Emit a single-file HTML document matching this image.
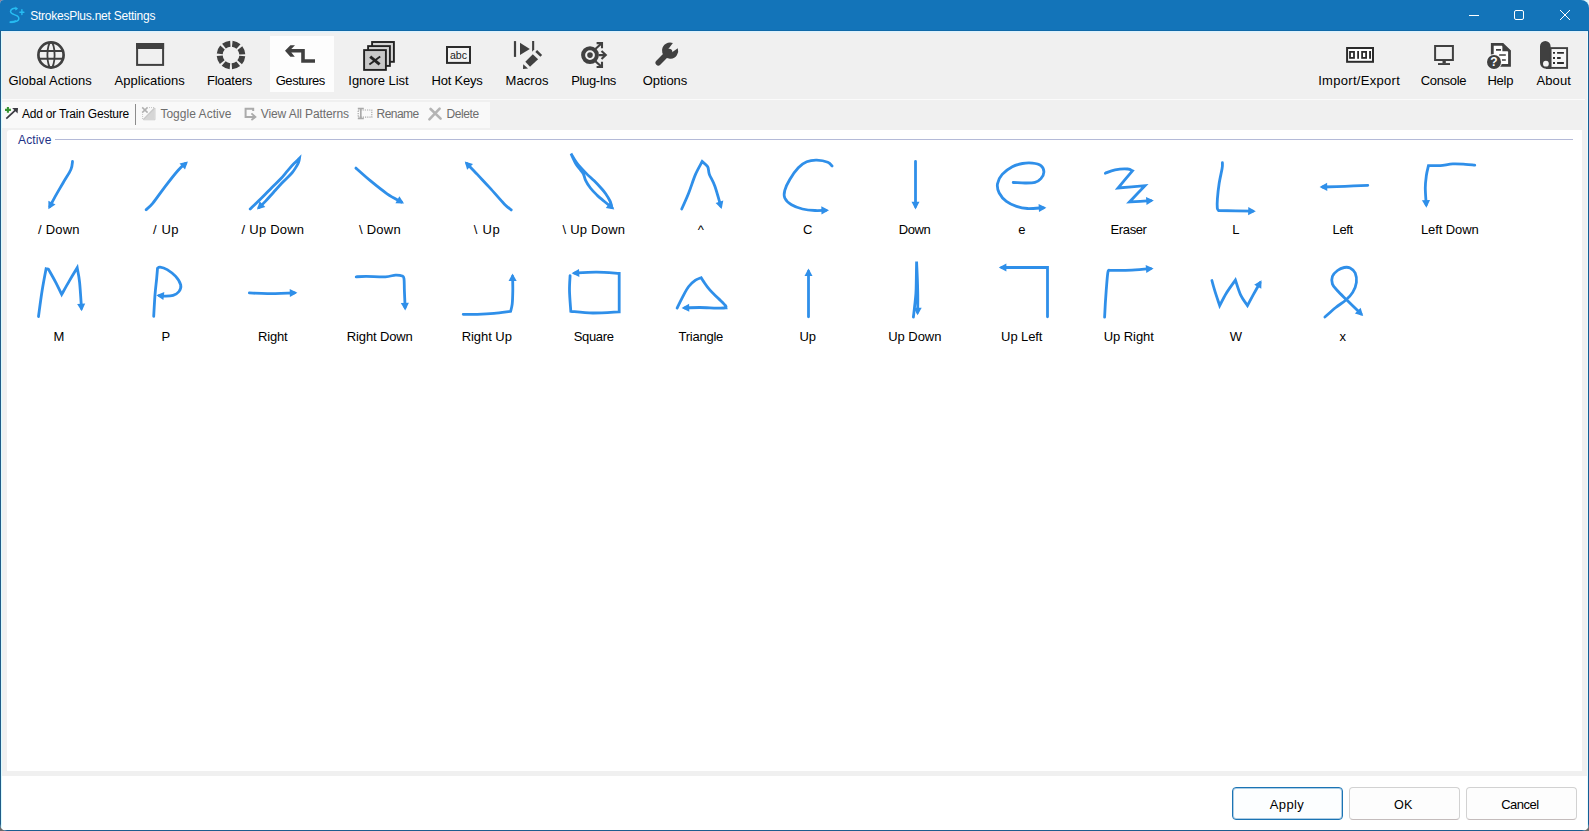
<!DOCTYPE html>
<html>
<head>
<meta charset="utf-8">
<title>StrokesPlus.net Settings</title>
<style>
html,body{margin:0;padding:0;}
body{width:1589px;height:831px;overflow:hidden;position:relative;background:#6a6a6a;font-family:"Liberation Sans",sans-serif;}
#win{position:absolute;left:0;top:0;width:1589px;height:831px;background:#f0f0f0;border-radius:4px 8px 7px 7px;overflow:hidden;}
.cn{position:absolute;width:10px;height:10px;}
#win div{position:absolute;}
#title{left:0;top:0;width:1589px;height:31px;background:#1374b9;}
#tdark{left:0;top:30px;width:1589px;height:1px;background:#0f69a8;}
#tline{left:1px;top:31px;width:1587px;height:1px;background:#dff1fb;}
#tline2{left:2px;top:32px;width:1585px;height:1px;background:#e6f1f8;}
#bl{left:0;top:31px;width:1px;height:800px;background:#205c88;}
#bl2{left:1px;top:32px;width:1px;height:798px;background:#d9fbff;}
#br{left:1588px;top:31px;width:1px;height:800px;background:#165d95;}
#br2{left:1587px;top:32px;width:1px;height:798px;background:#e6fdff;}
#bb{left:0;top:830px;width:1589px;height:1px;background:#1b5d8f;}
#sel{left:270px;top:36px;width:64px;height:56px;background:#fdfdfd;}
#hl{left:2px;top:99px;width:1583px;height:1px;background:#fbfbfb;}
#tb2{left:2px;top:102px;width:488px;height:26px;background:#f9f9f9;}
#sep{left:135px;top:104px;width:1px;height:21px;background:#8c8c8c;}
#content{left:7px;top:130px;width:1575px;height:641px;background:#fff;border-top-left-radius:3px;}
#gline{left:55px;top:139px;width:1518px;height:1px;background:#b4bad8;}
#bottom{left:2px;top:776px;width:1585px;height:54px;background:#fff;}
.btn{top:787px;width:109px;height:31px;border:1px solid #d2d2d2;border-bottom-color:#c4bcbc;border-radius:4px;background:#fdfdfd;}
#b1{left:1232px;border:1px solid #1b74b4;box-shadow:inset 0 0 0 1px rgba(27,116,180,.35);background:#fcfeff;}
#b2{left:1349px;}
#b3{left:1466px;}
svg{position:absolute;left:0;top:0;}
text{font-family:"Liberation Sans",sans-serif;}
</style>
</head>
<body>
<div class="cn" style="left:0;top:0;background:#8d7d98"></div><div class="cn" style="left:1579px;top:0;background:#dff6fb"></div>
<div id="win">
<div id="title"></div>
<div id="tdark"></div><div id="tline"></div><div id="tline2"></div>
<div id="sel"></div>
<div id="hl"></div>
<div id="tb2"></div>
<div id="sep"></div>
<div id="content"></div>
<div id="gline"></div>
<div id="bottom"></div>
<div class="btn" id="b1"></div>
<div class="btn" id="b2"></div>
<div class="btn" id="b3"></div>
<div id="bl"></div><div id="bl2"></div><div id="br"></div><div id="br2"></div><div id="bb"></div>

<svg width="1589" height="831" viewBox="0 0 1589 831">
<!-- title bar: logo + window controls -->
<g fill="none" stroke="#27bdf2" stroke-width="1.5" stroke-linecap="round" stroke-linejoin="round">
<path d="M16.6,8.7 C13.8,7.6 10.5,8.9 10.5,11.6 C10.5,14.3 14.6,14.3 17.2,15.9 C19.8,17.7 19.2,20.4 16.6,21.3 C14.6,21.9 12.2,21.9 10.4,22.2"/>
<path d="M21.9,9.8 V14.5 M19.9,12.2 H23.9" stroke-width="1.4"/>
<path d="M15.6,7.2 L17.7,8.5 L15.8,9.9 Z" fill="#27bdf2" stroke-width="0.5"/>
<path d="M10.2,22.7 C12.4,22.9 14.8,22.4 16.6,21.4 L15.9,20.4 C14.2,21 12.2,21.4 10.2,21.6 Z" fill="#27bdf2" stroke-width="0.5"/>
</g>
<g fill="none" stroke="#fff" stroke-width="1">
<path d="M1469,15.5 H1479"/>
<rect x="1514.5" y="10.5" width="9" height="9" rx="1.5"/>
<path d="M1560,10 L1570,20 M1570,10 L1560,20"/>
</g>

<!-- ===== main toolbar icons ===== -->
<!-- Global Actions: globe -->
<g fill="none" stroke="#404040">
<circle cx="51" cy="55" r="12.6" stroke-width="2.7"/>
<ellipse cx="51" cy="55" rx="3.6" ry="12.6" stroke-width="1.8"/>
<path d="M39,51 H63 M39,58.8 H63" stroke-width="1.9"/>
</g>
<!-- Applications: window -->
<g>
<rect x="137.1" y="44" width="26" height="20.9" fill="none" stroke="#404040" stroke-width="2"/>
<rect x="136.1" y="43" width="28" height="6" fill="#404040"/>
</g>
<!-- Floaters: segmented ring -->
<circle cx="231" cy="55" r="11.3" fill="none" stroke="#404040" stroke-width="6" stroke-dasharray="6.87 2" stroke-dashoffset="-1"/>
<!-- Gestures: stepped arrow -->
<g fill="#404040">
<path d="M285,50.8 L290.4,45.2 L295,45.2 L291.3,49.1 L304.8,49.1 L304.8,59.3 L315,59.3 L315,62.8 L301.2,62.8 L301.2,52.6 L291.3,52.6 L294.8,56.8 L290.4,56.8 Z"/>
</g>
<!-- Ignore List: stacked windows -->
<g stroke="#222" stroke-width="1.9">
<rect x="372.1" y="42" width="21.8" height="19.8" fill="#d4d4d4"/>
<rect x="368.1" y="46.1" width="21.8" height="19.8" fill="#d4d4d4"/>
<rect x="364.1" y="50.1" width="21.8" height="19.8" fill="#c8c8c8"/>
<path d="M370.2,56.7 L379.6,64.3" stroke-width="3" fill="none"/><path d="M380.2,56.6 L369.4,64.4" stroke-width="1.9" fill="none"/>
</g>
<!-- Hot Keys: abc box -->
<rect x="447" y="47" width="23" height="15.9" fill="#f4f4f4" stroke="#2c2c2c" stroke-width="2"/>
<text x="458.5" y="58.8" font-size="10.6" text-anchor="middle" fill="#222">abc</text>
<!-- Macros: play + pencil -->
<g fill="#404040">
<rect x="513.9" y="41.1" width="2.2" height="15.8"/>
<path d="M520,42.8 L529.8,48.9 L520,54.9 Z"/>
<path d="M532.1,41.1 H534.2 V49.6 L532.1,51.7 Z"/>
<path d="M532.8,54.2 L538.1,59.2 L530,66.7 L525.3,61.7 Z"/>
<path d="M537.1,50.1 L542.1,54.9 L540.4,56.7 L535.3,51.9 Z"/>
<path d="M523.2,64.2 L528,68.4 L523,69 Z"/>
</g>
<!-- Plug-Ins: target with arrows -->
<g fill="none" stroke="#404040">
<circle cx="590" cy="55.1" r="6.9" stroke-width="4"/>
<path d="M595.4,49 L601.4,43.5 M596.6,43.1 H602 V48.3 M598.8,55.1 H605 M601.5,50.9 L605.8,55.1 L601.5,59.1 M595.4,61.2 L601.4,66.6 M596.6,67 H602 V61.8" stroke-width="2.1"/>
</g>
<circle cx="590" cy="55.1" r="2.8" fill="#404040"/>
<!-- Options: wrench -->
<g>
<path d="M669.4,51.6 L658.3,62.7" stroke="#404040" stroke-width="5.6" stroke-linecap="round" fill="none"/>
<path d="M672.9,43.1 A8.1,8.1 0 1 0 677.8,48.2 L671.7,52.5 L668.4,48.9 Z" fill="#404040"/>
</g>
<!-- Import/Export: 0101 -->
<g>
<rect x="1347.1" y="48" width="25.9" height="13.8" fill="#fff" stroke="#2c2c2c" stroke-width="2"/>
<rect x="1350" y="51.9" width="4" height="6" fill="none" stroke="#2c2c2c" stroke-width="1.8"/>
<rect x="1357.2" y="51" width="1.8" height="7.8" fill="#2c2c2c"/>
<rect x="1362.1" y="51.9" width="4" height="6" fill="none" stroke="#2c2c2c" stroke-width="1.8"/>
<rect x="1369.1" y="51" width="1.9" height="7.8" fill="#2c2c2c"/>
</g>
<!-- Console: monitor -->
<g>
<rect x="1435.1" y="46" width="17.8" height="14" fill="none" stroke="#404040" stroke-width="2"/>
<rect x="1442.5" y="60.9" width="3.3" height="2.4" fill="#404040"/>
<rect x="1438" y="63.1" width="12" height="1.9" fill="#404040"/>
</g>
<!-- Help: document + ? -->
<g>
<path d="M1492.3,55 V44.4 H1502.6 L1509.5,51 V65.4 H1500" fill="#fff" stroke="#404040" stroke-width="2.8"/>
<path d="M1502.4,43 L1510.9,51.2 L1502.4,51.2 Z" fill="#404040"/>
<path d="M1496,49.9 H1501 M1499.2,55 H1505.8 M1502,60 H1505.8" stroke="#404040" stroke-width="1.7" fill="none"/>
<circle cx="1494" cy="62" r="8" fill="#f6f6f6"/>
<circle cx="1494" cy="62" r="7" fill="#404040"/>
<text x="1494" y="66.3" font-size="12" font-weight="bold" text-anchor="middle" fill="#fff">?</text>
</g>
<!-- About: scroll -->
<g>
<path d="M1540,46.2 A5.3,5.3 0 0 1 1550.6,46.2 V68.8 H1546 A6,6 0 0 1 1540,62.8 Z" fill="#404040"/>
<rect x="1550.6" y="48.1" width="16.5" height="19.8" fill="#f6f6f6" stroke="#404040" stroke-width="1.9"/>
<path d="M1546,68 H1551" stroke="#404040" stroke-width="1.9"/>
<circle cx="1545.9" cy="63.7" r="2.9" fill="#f4f4f4"/>
<path d="M1553,52.9 H1555 M1557.1,52.9 H1563.9 M1553,58 H1555 M1557.1,58 H1560.7 M1553,63 H1555 M1557.1,63 H1563.9" stroke="#2c2c2c" stroke-width="1.9" fill="none"/>
</g>

<!-- ===== secondary toolbar icons ===== -->
<path d="M7.9,107 V112.7 M5,109.9 H10.9" stroke="#35932f" stroke-width="2.1" fill="none"/>
<path d="M6.3,118.6 L16,109.6" stroke="#3a3a42" stroke-width="1.7" fill="none"/>
<path d="M12.2,108.1 L18,107.9 L17.6,113.6 Z" fill="#3a3a42"/>
<!-- toggle active (disabled) -->
<g>
<path d="M154.6,108.2 V119.6 H143.4 Z" fill="#d6d6d6"/>
<path d="M154.6,108 L143.2,119.6" stroke="#c6c6c6" stroke-width="1.2" fill="none"/>
<path d="M142.2,107.4 L147.6,112.6 M147.6,107.4 L142.2,112.6" stroke="#b0b0b0" stroke-width="1.5" fill="none"/>
<path d="M149,107.6 H154.8 M142.6,114 V119.6" stroke="#c4c4c4" stroke-width="1" stroke-dasharray="1 1" fill="none"/>
<path d="M143.4,119.8 H155 V108" stroke="#cfcfcf" stroke-width="1" fill="none"/>
</g>
<!-- view all patterns (disabled) -->
<g fill="none" stroke="#ababab" stroke-width="2">
<path d="M253.2,111 V108.8 H245.6 V117 H254"/>
<path d="M251.4,113.4 L255.4,117 L251.4,120" stroke-width="1.8"/>
</g>
<!-- rename (disabled) -->
<g fill="none" stroke="#a9a9a9">
<path d="M357.8,108.5 H363.8 M357.8,118.5 H363.8 M360.8,108.5 V118.5" stroke-width="1.7"/>
<rect x="358.2" y="110" width="13.6" height="7.2" stroke-width="1.2" stroke-dasharray="1.2 1"/>
</g>
<!-- delete (disabled) -->
<g fill="none" stroke="#b4b4b4" stroke-width="2.6" stroke-linecap="round">
<path d="M430.6,109 L440.6,118.6 M439.6,108.6 L429.4,119.4"/>
</g>

<!-- ===== gestures ===== -->
<path d="M72.5,161.5 C72.3,162.9 72.4,166 70.9,169.5 C69.4,173 66,177.8 63.3,182.5 C60.6,187.2 56.8,193.6 54.6,197.6 C52.4,201.6 50.6,205.1 49.8,206.6" fill="none" stroke="#2f8fe9" stroke-width="2.8" stroke-linecap="round" stroke-linejoin="miter" stroke-miterlimit="5"/><path d="M48.4,209.3 L48.4,200.7 L55.5,204.5Z" fill="#2f8fe9"/>
<path d="M146.1,209.7 C147.2,208.6 149.8,206.9 152.9,203.1 C156,199.3 160.5,192.6 164.7,187.1 C168.9,181.6 174.7,174.1 178.2,170.2 C181.7,166.3 184.4,164.5 185.7,163.4" fill="none" stroke="#2f8fe9" stroke-width="2.8" stroke-linecap="round" stroke-linejoin="miter" stroke-miterlimit="5"/><path d="M187.9,161.4 L185,169.5 L179.5,163.5Z" fill="#2f8fe9"/>
<path d="M250.2,209.1 C252.2,207.1 258.7,200.9 262.3,197.3 C265.9,193.7 268.8,190.5 271.9,187.4 C275,184.3 278.4,181.3 281,178.5 C283.6,175.7 285.5,173.1 287.7,170.6 C289.9,168.1 292,165.6 294,163.6 C296,161.6 298.6,159.2 299.5,158.3 C299.4,159 299.1,161 298.6,162.3 C298.1,163.6 297.8,164.3 296.7,166 C295.6,167.7 294.4,170.1 292.1,172.7 C289.9,175.3 286.2,178.6 283.2,181.8 C280.1,185 276.7,188.8 273.8,192 C270.9,195.2 268,198.5 265.6,201.1 C263.2,203.7 260.2,206.4 259.1,207.4" fill="none" stroke="#2f8fe9" stroke-width="2.8" stroke-linecap="round" stroke-linejoin="miter" stroke-miterlimit="5"/><path d="M257,209.5 L259.6,201.3 L265.3,207.1Z" fill="#2f8fe9"/>
<path d="M355.9,168.1 C358.3,170.2 365.1,176.4 370.3,180.7 C375.5,185 381.9,190.2 387.1,193.8 C392.3,197.4 399,200.6 401.4,202" fill="none" stroke="#2f8fe9" stroke-width="2.8" stroke-linecap="round" stroke-linejoin="miter" stroke-miterlimit="5"/><path d="M404,203.5 L395.4,203.2 L399.4,196.2Z" fill="#2f8fe9"/>
<path d="M511.2,209.9 C510.1,208.9 507.8,207.6 504.2,203.9 C500.6,200.2 494.4,192.8 489.9,187.9 C485.4,183 481.1,178.5 477.3,174.4 C473.5,170.3 468.6,165.4 466.9,163.6" fill="none" stroke="#2f8fe9" stroke-width="2.8" stroke-linecap="round" stroke-linejoin="miter" stroke-miterlimit="5"/><path d="M464.8,161.4 L473,164.1 L467.1,169.7Z" fill="#2f8fe9"/>
<path d="M611.5,205.6 C611.3,204.8 611,203 610,201 C609,199 606.9,195.5 605.5,193.5 C604.1,191.5 603.8,191.1 601.9,189 C600,186.9 596.9,183.5 594.2,180.8 C591.6,178.2 588.9,176.1 586,173.1 C583.1,170.1 579.4,166.2 576.9,163 C574.4,159.8 572,155.2 571,153.6 C571.8,155.3 574.4,161.3 576,164 C577.6,166.7 579.2,168.2 580.5,170 C581.8,171.8 582.8,172.8 583.6,174.5 C584.5,176.2 584.5,178.1 585.6,180.3 C586.7,182.6 588.5,185.5 590.4,188 C592.3,190.5 594.9,193 597.1,195.2 C599.3,197.4 601.3,198.9 603.8,201 C606.3,203.1 610.6,206.5 612,207.6" fill="none" stroke="#2f8fe9" stroke-width="2.8" stroke-linecap="round" stroke-linejoin="miter" stroke-miterlimit="5"/><path d="M614.3,209.5 L605.8,207.9 L610.9,201.6Z" fill="#2f8fe9"/>
<path d="M681.7,209 C682.9,206.4 686.4,198.8 688.7,193 C691,187.2 693.2,179.7 695.5,174.4 C697.8,169.2 701.1,163.7 702.2,161.5 C703.1,162.4 706.5,164.7 707.7,166.8 C708.9,169 708.2,171.2 709.4,174.4 C710.6,177.6 713,180.9 714.9,186.2 C716.8,191.5 719.8,202.8 720.8,206.1" fill="none" stroke="#2f8fe9" stroke-width="2.8" stroke-linecap="round" stroke-linejoin="miter" stroke-miterlimit="5"/><path d="M721.6,209 L715.6,202.9 L723.3,200.6Z" fill="#2f8fe9"/>
<path d="M832.1,166.1 C831.4,165.4 830.3,163.2 827.8,162.2 C825.3,161.2 820.3,160.2 816.8,160.1 C813.3,160 809.8,160.5 806.7,161.8 C803.6,163.1 801.1,164.8 798.3,167.7 C795.5,170.6 792,175.7 789.8,179.5 C787.5,183.3 785.6,187.3 784.8,190.4 C784,193.5 783.7,195.6 784.8,198 C785.9,200.4 788.5,203 791.5,204.8 C794.5,206.6 798.6,208.1 802.5,209 C806.4,209.9 811.2,210.3 815.1,210.5 C819,210.7 824.2,210.3 826,210.3" fill="none" stroke="#2f8fe9" stroke-width="2.8" stroke-linecap="round" stroke-linejoin="miter" stroke-miterlimit="5"/><path d="M829,210.2 L821.5,214.4 L821.3,206.3Z" fill="#2f8fe9"/>
<path d="M915.5,161.4 C915.5,165.3 915.5,177.5 915.5,185 C915.5,192.5 915.5,202.8 915.5,206.4" fill="none" stroke="#2f8fe9" stroke-width="2.8" stroke-linecap="round" stroke-linejoin="miter" stroke-miterlimit="5"/><path d="M915.5,209.4 L911.5,201.8 L919.5,201.8Z" fill="#2f8fe9"/>
<path d="M1013.2,182.5 C1015.1,182.5 1021.3,183 1024.9,183 C1028.5,183 1032.3,183.1 1035,182.4 C1037.7,181.7 1039.4,180.3 1040.9,178.6 C1042.4,176.8 1043.9,174.1 1043.9,171.9 C1043.9,169.7 1042.8,167.1 1040.9,165.6 C1039,164.1 1035.6,163.4 1032.5,163.1 C1029.4,162.8 1025.8,162.9 1022.4,163.5 C1019,164.1 1015.7,165 1012.3,166.8 C1008.9,168.6 1004.7,171.6 1002.2,174.4 C999.7,177.2 998,180.6 997.5,183.7 C997,186.8 997.7,190.1 999.2,193 C1000.7,195.9 1003.5,199.2 1006.4,201.4 C1009.3,203.6 1013,205.2 1016.5,206.4 C1020,207.6 1022.9,208.3 1027.4,208.5 C1031.9,208.7 1040.7,207.9 1043.4,207.8" fill="none" stroke="#2f8fe9" stroke-width="2.8" stroke-linecap="round" stroke-linejoin="miter" stroke-miterlimit="5"/><path d="M1046.4,207.7 L1039,212.1 L1038.6,204Z" fill="#2f8fe9"/>
<path d="M1105.3,173.2 C1106.9,172.6 1111.4,170.5 1115.1,169.8 C1118.8,169.1 1124.8,168.8 1127.7,169 C1130.6,169.2 1131.6,170.5 1132.4,170.8 C1130,173.7 1120.4,185.1 1118,188 C1122.5,187.6 1140.5,186 1145,185.6 C1142.4,188.3 1132.1,199.3 1129.5,202 C1133.1,201.8 1147.3,200.9 1150.8,200.7" fill="none" stroke="#2f8fe9" stroke-width="2.8" stroke-linecap="round" stroke-linejoin="miter" stroke-miterlimit="5"/><path d="M1153.8,200.5 L1146.5,205 L1146,196.9Z" fill="#2f8fe9"/>
<path d="M1222.4,162.7 C1222.4,163.6 1222.7,165 1222.1,168.5 C1221.5,172 1219.9,178.6 1219.1,183.7 C1218.3,188.8 1217.7,194.8 1217.4,198.9 C1217.1,203 1217.1,206.2 1217.3,208.1 C1217.5,210 1218.5,210.1 1218.7,210.5 C1224.4,210.6 1247.1,211.1 1252.8,211.2" fill="none" stroke="#2f8fe9" stroke-width="2.8" stroke-linecap="round" stroke-linejoin="miter" stroke-miterlimit="5"/><path d="M1255.8,211.3 L1248.1,215.2 L1248.3,207.1Z" fill="#2f8fe9"/>
<path d="M1367.8,185.4 C1364,185.6 1352.5,186 1345,186.3 C1337.5,186.6 1326.3,186.9 1322.6,187" fill="none" stroke="#2f8fe9" stroke-width="2.8" stroke-linecap="round" stroke-linejoin="miter" stroke-miterlimit="5"/><path d="M1319.6,187.1 L1327.1,182.8 L1327.3,190.9Z" fill="#2f8fe9"/>
<path d="M1474.8,165.1 C1473.3,165 1469.2,164.5 1465.5,164.3 C1461.8,164.1 1457.1,163.7 1452.9,163.9 C1448.7,164.1 1444.4,165.3 1440.3,165.6 C1436.2,165.9 1430.5,165.6 1428.5,165.6 C1428.2,167.2 1426.9,171.6 1426.4,175.3 C1425.9,179 1425.3,183 1425.3,187.9 C1425.3,192.8 1426.1,201.9 1426.2,204.7" fill="none" stroke="#2f8fe9" stroke-width="2.8" stroke-linecap="round" stroke-linejoin="miter" stroke-miterlimit="5"/><path d="M1426.4,207.7 L1421.9,200.3 L1430,199.9Z" fill="#2f8fe9"/>
<path d="M38.5,316.5 C39.1,312.2 40.8,298.6 42.1,290.7 C43.4,282.8 45.4,272.4 46.1,268.8 C46.5,268.9 48,269.1 48.4,269.2 C49.5,271.2 53,277.2 55.2,281.4 C57.4,285.6 60.6,292.2 61.7,294.4 C63,292.1 66.9,285 69.5,280.6 C72.1,276.2 75.9,269.9 77.2,267.8 C77.6,270.2 78.9,275.5 79.6,282.3 C80.3,289.1 81.2,304 81.5,308.3" fill="none" stroke="#2f8fe9" stroke-width="2.8" stroke-linecap="round" stroke-linejoin="miter" stroke-miterlimit="5"/><path d="M81.7,311.3 L77.1,304 L85.2,303.4Z" fill="#2f8fe9"/>
<path d="M153.7,316.4 C153.9,312.9 154.5,301.3 155,294.9 C155.5,288.5 156.3,282.5 156.7,278.1 C157.1,273.7 157.4,270 157.5,268.4 C157.9,268.2 158.5,266.9 160.1,267.1 C161.7,267.3 164.6,268.1 167.2,269.6 C169.8,271.2 173.4,273.9 175.7,276.4 C177.9,278.9 180.1,282.3 180.7,284.8 C181.2,287.3 180.3,289.8 179,291.5 C177.7,293.2 175.5,294.5 173.1,295.3 C170.7,296.1 167,296.1 164.7,296.2 C162.4,296.3 160.2,295.7 159.3,295.6" fill="none" stroke="#2f8fe9" stroke-width="2.8" stroke-linecap="round" stroke-linejoin="miter" stroke-miterlimit="5"/><path d="M156.3,295.3 L164.3,292.1 L163.4,300.1Z" fill="#2f8fe9"/>
<path d="M249.4,292.9 C252.4,293 260,293.6 267.5,293.6 C275,293.6 289.9,293 294.4,292.9" fill="none" stroke="#2f8fe9" stroke-width="2.8" stroke-linecap="round" stroke-linejoin="miter" stroke-miterlimit="5"/><path d="M297.4,292.8 L289.9,297.1 L289.7,289Z" fill="#2f8fe9"/>
<path d="M356.2,276.8 C357.8,276.7 361.2,276.4 366.1,276.4 C371,276.4 380.5,277 385.4,276.8 C390.3,276.6 392.7,275.2 395.5,275.1 C398.3,275 400.9,275.4 402.3,276 C403.7,276.6 403.6,276.4 404,278.9 C404.4,281.3 404.2,285.9 404.4,290.7 C404.6,295.5 405,304.7 405.1,307.5" fill="none" stroke="#2f8fe9" stroke-width="2.8" stroke-linecap="round" stroke-linejoin="miter" stroke-miterlimit="5"/><path d="M405.2,310.5 L400.8,303.1 L408.9,302.7Z" fill="#2f8fe9"/>
<path d="M463.2,314.3 C465.5,314.3 472.1,314.5 477.3,314.3 C482.5,314.1 488.6,313.8 494.1,313.3 C499.7,312.8 507.9,311.6 510.6,311.3 C510.9,310.1 511.8,307.6 512.2,304.2 C512.6,300.8 512.7,295.3 512.8,290.7 C512.9,286.1 512.6,278.8 512.6,276.4" fill="none" stroke="#2f8fe9" stroke-width="2.8" stroke-linecap="round" stroke-linejoin="miter" stroke-miterlimit="5"/><path d="M512.5,273.4 L516.7,280.9 L508.6,281.1Z" fill="#2f8fe9"/>
<path d="M570.1,275.6 C570,278.1 569.4,284.7 569.5,290.7 C569.6,296.7 570.6,307.9 570.8,311.3 C574.4,311.6 584.6,312.9 592.7,313 C600.8,313.1 614.8,312 619.2,311.8 C619.2,308.3 619.2,297.1 619.2,290.7 C619.2,284.3 619.2,276.3 619.2,273.4 C615.5,273.2 604.3,272.3 596.9,272.2 C589.5,272.1 578.3,272.9 574.6,273.1" fill="none" stroke="#2f8fe9" stroke-width="2.8" stroke-linecap="round" stroke-linejoin="miter" stroke-miterlimit="5"/><path d="M571.6,273.2 L579,268.9 L579.4,276.9Z" fill="#2f8fe9"/>
<path d="M677.1,308.1 C678,306.2 680.9,300.2 682.8,296.6 C684.7,293 686.6,289.2 688.7,286.5 C690.8,283.8 693.4,281.7 695.5,280.2 C697.6,278.7 700.2,278.1 701.2,277.7 C701.6,278.3 702.1,279.4 703.5,281.4 C704.9,283.4 707.3,287.1 709.8,289.9 C712.2,292.7 715.6,295.7 718.2,298.3 C720.8,300.9 724.1,303.9 725.4,305.5 C726.7,307.1 725.8,307.5 725.9,307.9 C724.3,307.9 720.9,308.3 716.5,308.2 C712.1,308.1 705,307.5 699.7,307.5 C694.4,307.5 687.1,307.8 684.6,307.9" fill="none" stroke="#2f8fe9" stroke-width="2.8" stroke-linecap="round" stroke-linejoin="miter" stroke-miterlimit="5"/><path d="M681.6,308 L689.1,303.7 L689.3,311.8Z" fill="#2f8fe9"/>
<path d="M808.5,316.8 C808.5,312.4 808.5,297.6 808.5,290 C808.5,282.4 808.5,274.5 808.5,271.4" fill="none" stroke="#2f8fe9" stroke-width="2.8" stroke-linecap="round" stroke-linejoin="miter" stroke-miterlimit="5"/><path d="M808.5,268.4 L812.5,276 L804.5,276Z" fill="#2f8fe9"/>
<path d="M913.4,317.1 C913.6,315.2 914.3,309.6 914.7,305.7 C915.1,301.8 915.6,297.9 915.9,293.6 C916.2,289.3 916.2,285.4 916.3,280 C916.4,274.6 916.5,264.6 916.6,261.5 C916.7,264.6 917.2,273.9 917.4,280 C917.6,286.1 917.8,293 917.8,298.4 C917.8,303.8 917.7,310 917.6,312.3" fill="none" stroke="#2f8fe9" stroke-width="2.8" stroke-linecap="round" stroke-linejoin="miter" stroke-miterlimit="5"/><path d="M917.6,315.3 L913.6,307.7 L921.7,307.7Z" fill="#2f8fe9"/>
<path d="M1047.5,316.8 C1047.5,308.6 1047.5,275.7 1047.5,267.5 C1039.9,267.5 1009.4,267.5 1001.8,267.5" fill="none" stroke="#2f8fe9" stroke-width="2.8" stroke-linecap="round" stroke-linejoin="miter" stroke-miterlimit="5"/><path d="M998.8,267.5 L1006.4,263.4 L1006.4,271.6Z" fill="#2f8fe9"/>
<path d="M1104.6,317.2 C1104.8,312.8 1105.6,298.2 1106.2,290.7 C1106.8,283.2 1107.3,275.6 1107.9,272.2 C1108.5,268.8 1109.3,270.6 1109.6,270.3 C1113.3,270.3 1125.1,270.4 1131.9,270.1 C1138.7,269.8 1147.5,268.9 1150.6,268.6" fill="none" stroke="#2f8fe9" stroke-width="2.8" stroke-linecap="round" stroke-linejoin="miter" stroke-miterlimit="5"/><path d="M1153.6,268.4 L1146.3,273 L1145.7,265Z" fill="#2f8fe9"/>
<path d="M1211.9,280.5 C1212.4,282.5 1214,288.2 1215.3,292.4 C1216.6,296.6 1219,303.4 1219.7,305.6 C1220.8,303.5 1223.7,297.5 1226.3,293.2 C1228.9,288.9 1233.9,282.2 1235.4,280 C1236.3,282.5 1238.6,290.6 1240.6,294.9 C1242.6,299.2 1246.3,303.8 1247.5,305.6 C1248.5,303.8 1251.1,298.7 1253.2,294.9 C1255.3,291.1 1258.9,284.8 1260,282.8" fill="none" stroke="#2f8fe9" stroke-width="2.8" stroke-linecap="round" stroke-linejoin="miter" stroke-miterlimit="5"/><path d="M1261.5,280.2 L1261.3,288.8 L1254.2,284.8Z" fill="#2f8fe9"/>
<path d="M1324.9,317 C1326.8,315.4 1332.3,310.3 1335.8,307.5 C1339.3,304.7 1343.1,302.5 1345.9,300 C1348.7,297.5 1351,295.3 1352.7,292.4 C1354.5,289.4 1356,285.5 1356.4,282.3 C1356.8,279.1 1356.2,275.4 1355.2,273 C1354.2,270.6 1351.9,268.9 1350.1,268 C1348.3,267.1 1346.3,267.1 1344.2,267.5 C1342.1,267.9 1339.5,269 1337.5,270.5 C1335.5,272 1333.2,274.1 1332.4,276.4 C1331.6,278.6 1331.6,281.6 1332.4,284 C1333.2,286.4 1335,287.9 1337.5,290.7 C1340,293.5 1343.7,296.9 1347.6,300.8 C1351.5,304.7 1358.8,311.7 1361.1,313.9" fill="none" stroke="#2f8fe9" stroke-width="2.8" stroke-linecap="round" stroke-linejoin="miter" stroke-miterlimit="5"/><path d="M1363.2,316 L1354.9,313.6 L1360.6,307.8Z" fill="#2f8fe9"/>

<!-- ===== text ===== -->
<text x="38.1" y="234" font-size="13" fill="#000" text-anchor="start" textLength="41.4" lengthAdjust="spacing">/ Down</text>
<text x="153.1" y="234" font-size="13" fill="#000" text-anchor="start" textLength="25.5" lengthAdjust="spacing">/ Up</text>
<text x="241.6" y="234" font-size="13" fill="#000" text-anchor="start" textLength="62.5" lengthAdjust="spacing">/ Up Down</text>
<text x="358.9" y="234" font-size="13" fill="#000" text-anchor="start" textLength="41.8" lengthAdjust="spacing">\ Down</text>
<text x="473.8" y="234" font-size="13" fill="#000" text-anchor="start" textLength="26" lengthAdjust="spacing">\ Up</text>
<text x="562.4" y="234" font-size="13" fill="#000" text-anchor="start" textLength="62.7" lengthAdjust="spacing">\ Up Down</text>
<text x="700.8" y="234" font-size="13" fill="#000" text-anchor="middle">^</text>
<text x="807.8" y="234" font-size="13" fill="#000" text-anchor="middle">C</text>
<text x="898.8" y="234" font-size="13" fill="#000" text-anchor="start" textLength="32" lengthAdjust="spacing">Down</text>
<text x="1021.8" y="234" font-size="13" fill="#000" text-anchor="middle">e</text>
<text x="1110.6" y="234" font-size="13" fill="#000" text-anchor="start" textLength="36.3" lengthAdjust="spacing">Eraser</text>
<text x="1235.8" y="234" font-size="13" fill="#000" text-anchor="middle">L</text>
<text x="1332.6" y="234" font-size="13" fill="#000" text-anchor="start" textLength="20.4" lengthAdjust="spacing">Left</text>
<text x="1420.9" y="234" font-size="13" fill="#000" text-anchor="start" textLength="57.8" lengthAdjust="spacing">Left Down</text>
<text x="58.8" y="341" font-size="13" fill="#000" text-anchor="middle">M</text>
<text x="165.8" y="341" font-size="13" fill="#000" text-anchor="middle">P</text>
<text x="258.1" y="341" font-size="13" fill="#000" text-anchor="start" textLength="29.5" lengthAdjust="spacing">Right</text>
<text x="346.8" y="341" font-size="13" fill="#000" text-anchor="start" textLength="66" lengthAdjust="spacing">Right Down</text>
<text x="461.7" y="341" font-size="13" fill="#000" text-anchor="start" textLength="50.2" lengthAdjust="spacing">Right Up</text>
<text x="573.8" y="341" font-size="13" fill="#000" text-anchor="start" textLength="40.1" lengthAdjust="spacing">Square</text>
<text x="678.4" y="341" font-size="13" fill="#000" text-anchor="start" textLength="44.9" lengthAdjust="spacing">Triangle</text>
<text x="807.8" y="341" font-size="13" fill="#000" text-anchor="middle">Up</text>
<text x="888.2" y="341" font-size="13" fill="#000" text-anchor="start" textLength="53.2" lengthAdjust="spacing">Up Down</text>
<text x="1001.1" y="341" font-size="13" fill="#000" text-anchor="start" textLength="41.3" lengthAdjust="spacing">Up Left</text>
<text x="1103.7" y="341" font-size="13" fill="#000" text-anchor="start" textLength="50.2" lengthAdjust="spacing">Up Right</text>
<text x="1235.8" y="341" font-size="13" fill="#000" text-anchor="middle">W</text>
<text x="1342.8" y="341" font-size="13" fill="#000" text-anchor="middle">x</text>
<text x="8.4" y="85" font-size="13" fill="#000" text-anchor="start" textLength="83.3" lengthAdjust="spacing">Global Actions</text>
<text x="114.6" y="85" font-size="13" fill="#000" text-anchor="start" textLength="70.2" lengthAdjust="spacing">Applications</text>
<text x="207" y="85" font-size="13" fill="#000" text-anchor="start" textLength="45.3" lengthAdjust="spacing">Floaters</text>
<text x="275.7" y="85" font-size="13" fill="#000" text-anchor="start" textLength="49.6" lengthAdjust="spacing">Gestures</text>
<text x="348.3" y="85" font-size="13" fill="#000" text-anchor="start" textLength="60.4" lengthAdjust="spacing">Ignore List</text>
<text x="431.6" y="85" font-size="13" fill="#000" text-anchor="start" textLength="51.1" lengthAdjust="spacing">Hot Keys</text>
<text x="505.6" y="85" font-size="13" fill="#000" text-anchor="start" textLength="42.8" lengthAdjust="spacing">Macros</text>
<text x="571.3" y="85" font-size="13" fill="#000" text-anchor="start" textLength="45" lengthAdjust="spacing">Plug-Ins</text>
<text x="642.8" y="85" font-size="13" fill="#000" text-anchor="start" textLength="44.5" lengthAdjust="spacing">Options</text>
<text x="1318.2" y="85" font-size="13" fill="#000" text-anchor="start" textLength="81.6" lengthAdjust="spacing">Import/Export</text>
<text x="1420.7" y="85" font-size="13" fill="#000" text-anchor="start" textLength="45.8" lengthAdjust="spacing">Console</text>
<text x="1487.4" y="85" font-size="13" fill="#000" text-anchor="start" textLength="26.1" lengthAdjust="spacing">Help</text>
<text x="1536.5" y="85" font-size="13" fill="#000" text-anchor="start" textLength="34.4" lengthAdjust="spacing">About</text>
<text x="22" y="118" font-size="12" fill="#000" text-anchor="start" textLength="107.2" lengthAdjust="spacing">Add or Train Gesture</text>
<text x="160.4" y="118" font-size="12" fill="#6d6d6d" text-anchor="start" textLength="71" lengthAdjust="spacing">Toggle Active</text>
<text x="260.8" y="118" font-size="12" fill="#6d6d6d" text-anchor="start" textLength="88.2" lengthAdjust="spacing">View All Patterns</text>
<text x="376.6" y="118" font-size="12" fill="#6d6d6d" text-anchor="start" textLength="42.6" lengthAdjust="spacing">Rename</text>
<text x="446.5" y="118" font-size="12" fill="#6d6d6d" text-anchor="start" textLength="32.6" lengthAdjust="spacing">Delete</text>
<text x="18" y="144" font-size="12" fill="#1e3287" text-anchor="start" textLength="33.4" lengthAdjust="spacing">Active</text>
<text x="30.2" y="20" font-size="12" fill="#fff" text-anchor="start" textLength="125.2" lengthAdjust="spacing">StrokesPlus.net Settings</text>
<text x="1269.8" y="809" font-size="13" fill="#000" text-anchor="start" textLength="34" lengthAdjust="spacing">Apply</text>
<text x="1403.2" y="809" font-size="12.6" fill="#000" text-anchor="middle">OK</text>
<text x="1501.2" y="809" font-size="13" fill="#000" text-anchor="start" textLength="38" lengthAdjust="spacing">Cancel</text>
</svg>
</div>
</body>
</html>
